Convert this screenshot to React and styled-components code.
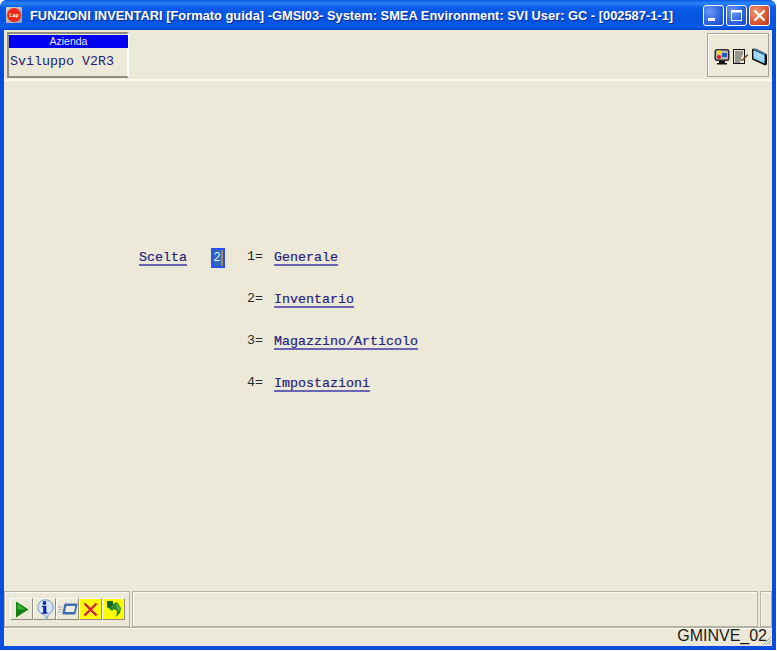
import React from "react";
import styled, { createGlobalStyle } from "styled-components";

const GlobalStyle = createGlobalStyle`
  html, body { margin: 0; padding: 0; background: #fff; }
  body { width: 777px; height: 651px; overflow: hidden; font-family: "Liberation Sans", Arial, sans-serif; }
`;

const Win = styled.div`
  width: 776px;
  height: 650px;
  display: flex;
  flex-direction: column;
  box-sizing: border-box;
  border-radius: 7px 7px 0 0;
  overflow: hidden;
  background: #0a4be0;
`;

const TitleBar = styled.div`
  height: 30px;
  flex: none;
  display: flex;
  align-items: center;
  padding: 0 6px 0 6px;
  background: linear-gradient(180deg, #0a58e4 0%, #2a84f4 10%, #0a5ce8 26%, #0453e0 70%, #0a5cea 90%, #0342c8 100%);
`;

const AppIcon = styled.div`
  width: 16px;
  height: 16px;
  flex: none;
  border-radius: 1px;
  background: linear-gradient(135deg, #d8d4c8, #9a9aa8);
  display: flex;
  align-items: center;
  justify-content: center;
`;

const AppDisc = styled.div`
  width: 14px;
  height: 14px;
  border-radius: 50%;
  background: radial-gradient(circle at 40% 40%, #f02818 0 60%, #a81810 100%);
  color: #fff;
  font-size: 5px;
  font-weight: 700;
  line-height: 14px;
  text-align: center;
`;

const TitleText = styled.div`
  margin-left: 8px;
  color: #fff;
  font-size: 12.86px;
  font-weight: 700;
  text-shadow: 1px 1px 0 #0a2a90;
  white-space: nowrap;
  flex: 1;
`;

const WinButtons = styled.div`
  display: flex;
  gap: 2px;
`;

const WinButton = styled.div`
  width: 21px;
  height: 21px;
  box-sizing: border-box;
  border: 1px solid #fff;
  border-radius: 3px;
  background: ${(p) =>
    p.$close
      ? "radial-gradient(circle at 30% 30%, #f09878 0%, #dc5a34 55%, #b83410 100%)"
      : "radial-gradient(circle at 30% 30%, #6c98f4 0%, #2c62e0 60%, #1c48c4 100%)"};
  display: flex;
  align-items: center;
  justify-content: center;
`;

const Client = styled.div`
  flex: 1;
  margin: 0 4px 4px 4px;
  background: #ece9d8;
  display: flex;
  flex-direction: column;
  min-height: 0;
`;

const TopBar = styled.div`
  height: 51px;
  flex: none;
  box-sizing: border-box;
  border-bottom: 2px solid #fbfaf5;
  display: flex;
  justify-content: space-between;
  padding: 2px 3px 0 3px;
`;

const CompanyBox = styled.div`
  width: 122px;
  height: 46px;
  box-sizing: border-box;
  border: 2px solid;
  border-color: #8f8d80 #fff #8f8d80 #8f8d80;
  display: flex;
  flex-direction: column;
  padding-top: 1px;
`;

const CompanyTitle = styled.div`
  height: 13px;
  width: 119px;
  background: #0000f0;
  color: #e8e8ff;
  font-size: 10.5px;
  line-height: 13px;
  text-align: center;
`;

const CompanyName = styled.div`
  margin-top: 7px;
  padding-left: 1px;
  font-family: "Liberation Mono", "Courier New", monospace;
  font-size: 13.33px;
  line-height: 14px;
  color: #1c1c70;
  white-space: nowrap;
`;

const ToolBox = styled.div`
  width: 62px;
  height: 44px;
  margin-top: 1px;
  box-sizing: border-box;
  border: 1px solid #a5a397;
  box-shadow: inset 1px 1px 0 #fff;
  display: flex;
  align-items: center;
  justify-content: flex-end;
  gap: 3px;
  padding: 3px 0 0 6px;
`;

const Main = styled.div`
  flex: 1;
  min-height: 0;
  padding: 167px 0 0 135px;
  box-sizing: border-box;
  font-family: "Liberation Mono", "Courier New", monospace;
  font-size: 13.33px;
  line-height: 15px;
`;

const MenuGrid = styled.div`
  display: grid;
  grid-template-columns: 72px 36px 27px auto;
  grid-auto-rows: 42px;
  justify-content: start;
`;

const Cell = styled.div`
  height: 20px;
  display: flex;
  align-items: center;
  color: #2b2b2b;
`;

const LinkCell = styled(Cell)`
  box-sizing: border-box;
  padding-top: 1px;
`;

const NumCell = styled(Cell)`
  box-sizing: border-box;
  padding-bottom: 3px;
`;

const Link = styled.span`
  color: #24247c;
  border-bottom: 2px solid #6a64b4;
  -webkit-text-stroke: 0.2px currentColor;
  line-height: 13px;
  white-space: nowrap;
`;

const Field = styled.div`
  width: 14px;
  height: 20px;
  box-sizing: border-box;
  border: 2px solid #2b4ff0;
  background: #2f68b8;
  color: #e4ecfa;
  display: flex;
  align-items: center;
  justify-content: center;
  font-size: 12px;
  padding-right: 2px;
  box-shadow: inset -2px 0 0 #a08858;
`;

const Footer = styled.div`
  flex: none;
  height: 36px;
  display: flex;
  gap: 2px;
`;

const Panel = styled.div`
  box-sizing: border-box;
  height: 36px;
  border: 1px solid #b4b2a4;
  box-shadow: inset 1px 1px 0 #fbfaf5;
  flex: ${(p) => (p.$grow ? 1 : "none")};
  width: ${(p) => (p.$w ? `${p.$w}px` : "auto")};
  display: flex;
  align-items: center;
  padding-left: 5px;
`;

const ActionBtn = styled.div`
  width: 23px;
  height: 22px;
  box-sizing: border-box;
  border: 1px solid;
  border-color: #fff #8f8d80 #8f8d80 #fff;
  background: ${(p) => (p.$yellow ? "#ffff00" : "#ece9d8")};
  display: flex;
  align-items: center;
  justify-content: center;
`;

const StatusBar = styled.div`
  flex: none;
  height: 19px;
  box-sizing: border-box;
  border-top: 1px solid #b4b2a4;
  box-shadow: inset 0 1px 0 #fbfaf5;
  display: flex;
  justify-content: flex-end;
  align-items: flex-start;
  padding-right: 5px;
  font-size: 16px;
  line-height: 16px;
  color: #1a1a1a;
  position: relative;
  overflow: hidden;
`;

const Grip = styled.svg`
  position: absolute;
  right: 0;
  bottom: 0;
`;

const Monitor = () => (
  <svg width="16" height="17" viewBox="0 0 16 17">
    <rect x="0.5" y="1" width="15" height="12" rx="2.5" fill="#2e2e2e" />
    <rect x="2" y="2.5" width="12" height="9" rx="1" fill="#b8b8b8" />
    <rect x="3" y="2.5" width="4.5" height="4" fill="#f4d820" />
    <rect x="8" y="5" width="5" height="4" fill="#2a58c0" />
    <circle cx="5" cy="9" r="2" fill="#e81818" />
    <rect x="5" y="13" width="6" height="2" fill="#111" />
    <rect x="3" y="15" width="10" height="1.5" fill="#111" />
  </svg>
);

const Notes = () => (
  <svg width="15" height="15" viewBox="0 0 15 15">
    <rect x="0.5" y="0.5" width="11" height="14" fill="#e8e6d8" stroke="#111" />
    <path d="M2 3h8M2 5h8M2 7h7M2 9h6M2 11h7M2 13h5" stroke="#333" strokeWidth="0.9" />
    <path d="M15 5.5l-6 6" stroke="#7a5020" strokeWidth="1.6" />
  </svg>
);

const Book = () => (
  <svg width="17" height="18" viewBox="0 0 17 18">
    <path d="M2 0.5l4 1 10 5v10l-2 1-13-6v-10z" fill="#111" />
    <path d="M2.5 2l11 5v8.5l-11-5z" fill="#8ed0f4" />
    <path d="M2.5 4.5l11 5M2.5 7l11 5" stroke="#c4e8fa" strokeWidth="1" />
    <path d="M2 1l3-0.5 10 5-1.5 1.5z" fill="#4a7a98" />
  </svg>
);

const Play = () => (
  <svg width="14" height="17" viewBox="0 0 14 17">
    <path d="M1 0.5l12.5 8-12.5 8z" fill="#128012" />
    <path d="M2.5 2.5v6l8 0z" fill="#36b036" />
  </svg>
);

const Info = () => (
  <svg width="19" height="20" viewBox="0 0 19 20">
    <path d="M9.5 0.8a8.3 7.6 0 0 1 4 14.4L12 19.5l-3.2-4A8.3 7.6 0 0 1 9.5 0.8z" fill="#d8e6fa" stroke="#6f96cc" />
    <circle cx="9.5" cy="4" r="1.9" fill="#102c90" />
    <path d="M7 6.8h4.4v6.6h1.2v1.4H6.8v-1.4h1.4V8.2H7z" fill="#102c90" />
  </svg>
);

const Screen = () => (
  <svg width="20" height="14" viewBox="0 0 20 14">
    <path d="M0 5h4M1 7.5h3M0 10h3" stroke="#a8a8a0" strokeWidth="1" />
    <path d="M7.5 1.5h11q1 0 1 1l-2 9q-.2 1-1.2 1h-11q-1 0-1-1l2-9q.2-1 1.2-1z" fill="#3c6cb0" />
    <path d="M8.4 4h8.8l-1.2 6H7z" fill="#f0eee2" />
  </svg>
);

const Cross = () => (
  <svg width="15" height="15" viewBox="0 0 15 15">
    <path d="M1.5 1.5l12 12M13.5 1.5l-12 12" stroke="#d81840" strokeWidth="2.4" />
  </svg>
);

const Back = () => (
  <svg width="17" height="18" viewBox="0 0 17 18">
    <path d="M2 1h6v3l4-2 4 6-1 5-4 4 1-6-3-2-2 2-5-4z" fill="#2a8a2a" />
    <path d="M2 1h6v3L4 8 2 7z" fill="#146014" />
    <path d="M11 3l4 5-1 4-2-4z" fill="#62b84e" />
  </svg>
);

const items = [
  { n: "1=", label: "Generale" },
  { n: "2=", label: "Inventario" },
  { n: "3=", label: "Magazzino/Articolo" },
  { n: "4=", label: "Impostazioni" },
];

export default function App() {
  return (
    <>
      <GlobalStyle />
      <Win>
        <TitleBar>
          <AppIcon>
            <AppDisc>Lap</AppDisc>
          </AppIcon>
          <TitleText>
            FUNZIONI INVENTARI [Formato guida] -GMSI03- System: SMEA Environment: SVI User: GC - [002587-1-1]
          </TitleText>
          <WinButtons>
            <WinButton>
              <svg width="13" height="13" viewBox="0 0 13 13">
                <rect x="1" y="9" width="7" height="3" fill="#fff" />
              </svg>
            </WinButton>
            <WinButton>
              <svg width="13" height="13" viewBox="0 0 13 13">
                <rect x="1.5" y="2.5" width="10" height="9" fill="none" stroke="#fff" />
                <rect x="1" y="1" width="11" height="2.5" fill="#fff" />
              </svg>
            </WinButton>
            <WinButton $close>
              <svg width="13" height="13" viewBox="0 0 13 13">
                <path d="M1.5 1.5l10 10M11.5 1.5l-10 10" stroke="#fff" strokeWidth="2.2" />
              </svg>
            </WinButton>
          </WinButtons>
        </TitleBar>
        <Client>
          <TopBar>
            <CompanyBox>
              <CompanyTitle>Azienda</CompanyTitle>
              <CompanyName>Sviluppo V2R3</CompanyName>
            </CompanyBox>
            <ToolBox>
              <Monitor />
              <Notes />
              <Book />
            </ToolBox>
          </TopBar>
          <Main>
            <MenuGrid>
              {items.map((it, i) => (
                <React.Fragment key={it.n}>
                  <LinkCell>{i === 0 && <Link>Scelta</Link>}</LinkCell>
                  <Cell>{i === 0 && <Field>2</Field>}</Cell>
                  <NumCell>{it.n}</NumCell>
                  <LinkCell>
                    <Link>{it.label}</Link>
                  </LinkCell>
                </React.Fragment>
              ))}
            </MenuGrid>
          </Main>
          <Footer>
            <Panel $w={126}>
              <ActionBtn><Play /></ActionBtn>
              <ActionBtn><Info /></ActionBtn>
              <ActionBtn><Screen /></ActionBtn>
              <ActionBtn $yellow><Cross /></ActionBtn>
              <ActionBtn $yellow><Back /></ActionBtn>
            </Panel>
            <Panel $grow />
            <Panel $w={12} />
          </Footer>
          <StatusBar>
            GMINVE_02
            <Grip width="12" height="12" viewBox="0 0 12 12">
              <path d="M11 3L3 11M11 6l-5 5M11 9l-2 2" stroke="#a5a397" strokeWidth="1" />
            </Grip>
          </StatusBar>
        </Client>
      </Win>
    </>
  );
}
